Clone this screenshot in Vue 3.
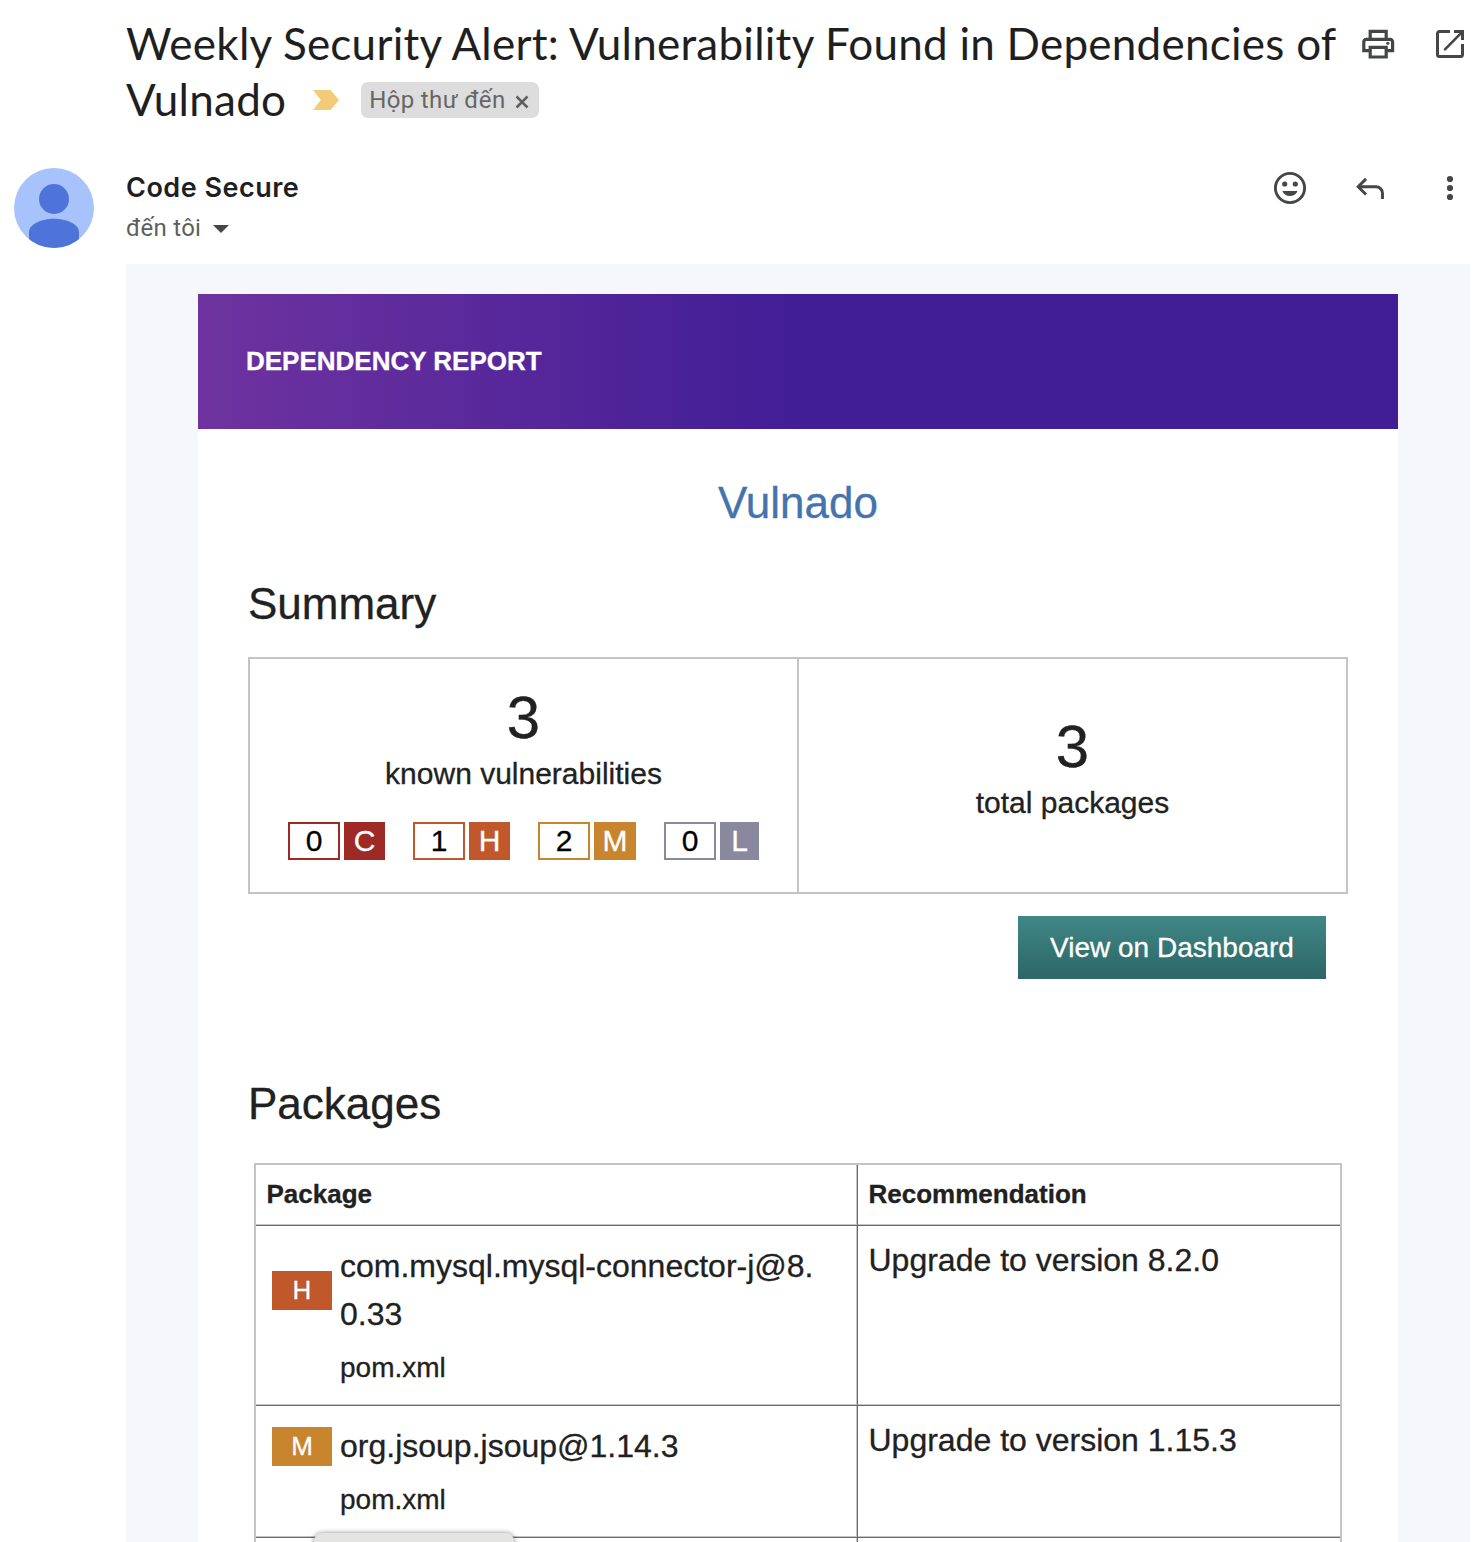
<script setup>
const severities = [
  { key: 'c', label: 'C', count: 0 },
  { key: 'h', label: 'H', count: 1 },
  { key: 'm', label: 'M', count: 2 },
  { key: 'l', label: 'L', count: 0 },
]

const packages = [
  { severity: 'h', label: 'H', lines: ['com.mysql.mysql-connector-j@8.', '0.33'], file: 'pom.xml', fix: 'Upgrade to version 8.2.0' },
  { severity: 'm', label: 'M', lines: ['org.jsoup.jsoup@1.14.3'], file: 'pom.xml', fix: 'Upgrade to version 1.15.3' },
]
</script>

<template>
  <div class="page">
    <header class="subject">
      <div class="subject-text">
        <h1 class="subject-line">Weekly Security Alert: Vulnerability Found in Dependencies of</h1>
        <div class="subject-row">
          <span class="subject-line">Vulnado</span>
          <svg class="marker" width="26" height="20" viewBox="0 0 26 20"><path d="M0 0h17.500L26 10l-8.500 10H0l7.800-10z" fill="#f1cb77" /></svg>
          <span class="chip">
            <span>Hộp thư đến</span>
            <svg width="14" height="14" viewBox="0 0 14 14"><path d="M1.500 1.500l11 11M12.500 1.500l-11 11" stroke="#5f5f5f" stroke-width="2.500" fill="none" /></svg>
          </span>
        </div>
      </div>
      <div class="actions subject-actions">
        <svg width="38.400" height="38.400" viewBox="0 0 24 24" fill="#444746">
          <path fill-rule="evenodd" d="M18 8V3H6v5H4.500C3.100 8 2 9.100 2 10.500V17h4v4h12v-4h4v-6.500C22 9.100 20.900 8 19.500 8zM8 5h8v3H8zM16 19H8v-4h8zM20 15h-2v-2H6v2H4v-4.300c0-.4.300-.7.700-.7h14.600c.4 0 .7.300.7.700z" />
          <circle cx="18" cy="11.400" r="1" />
        </svg>
        <svg width="32" height="32" viewBox="0 0 32 32" fill="none" stroke="#444746" stroke-width="3">
          <path d="M16 3.500H5.500a2 2 0 0 0-2 2v21a2 2 0 0 0 2 2h21a2 2 0 0 0 2-2V16" />
          <path d="M20 3.500h8.500V12" />
          <path d="M11 21.300L28 4.200" stroke-linecap="round" stroke-width="2.600" />
        </svg>
      </div>
    </header>

    <section class="sender">
      <svg class="avatar" width="80" height="80" viewBox="0 0 80 80">
        <defs><clipPath id="avatarClip"><circle cx="40" cy="40" r="40" /></clipPath></defs>
        <circle cx="40" cy="40" r="40" fill="#a8c2fb" />
        <g clip-path="url(#avatarClip)" fill="#4f74d9">
          <circle cx="40" cy="31" r="15" />
          <path d="M15 80V64C15 56 28 50.700 40 50.700S65 56 65 64v16z" />
        </g>
      </svg>
      <div class="sender-info">
        <div class="sender-name">Code Secure</div>
        <div class="sender-to">
          <span>đến tôi</span>
          <svg width="16" height="8" viewBox="0 0 16 8"><path d="M0 0h16L8 8z" fill="#444746" /></svg>
        </div>
      </div>
      <div class="actions">
        <svg width="40" height="40" viewBox="0 0 40 40" fill="#444746">
          <circle cx="20" cy="20" r="14.600" fill="none" stroke="#444746" stroke-width="2.900" />
          <circle cx="14.700" cy="16" r="2.600" />
          <circle cx="25.300" cy="16" r="2.600" />
          <path d="M12.300 23h15.200C26.200 26.300 23.300 28.100 19.900 28.100S13.600 26.300 12.300 23z" />
        </svg>
        <svg width="40" height="40" viewBox="0 0 40 40" fill="none" stroke="#444746" stroke-width="2.900">
          <path d="M16 10.900l-7.800 7.800 7.800 7.800M8.500 18.700H26a6.500 6.500 0 0 1 6.500 6.500V31" />
        </svg>
        <svg width="40" height="40" viewBox="0 0 40 40" fill="#444746">
          <circle cx="20" cy="11" r="3.100" /><circle cx="20" cy="20" r="3.100" /><circle cx="20" cy="29" r="3.100" />
        </svg>
      </div>
    </section>

    <main class="mail">
      <div class="report">
        <div class="banner">DEPENDENCY REPORT</div>
        <div class="content">
          <h2 class="project">Vulnado</h2>
          <h2 class="heading">Summary</h2>
          <div class="summary">
            <div class="cell">
              <div class="big">3</div>
              <div class="caption">known vulnerabilities</div>
              <div class="badges">
                <div v-for="s in severities" :key="s.key" class="badge" :class="s.key">
                  <span class="count">{{ s.count }}</span>
                  <span class="letter">{{ s.label }}</span>
                </div>
              </div>
            </div>
            <div class="cell total">
              <div class="big">3</div>
              <div class="caption">total packages</div>
            </div>
          </div>
          <div class="button-row"><a class="button">View on Dashboard</a></div>
          <h2 class="heading packages-heading">Packages</h2>
          <div class="packages">
            <div class="row head">
              <div class="col-package">Package</div>
              <div class="col-fix">Recommendation</div>
            </div>
            <div v-for="p in packages" :key="p.fix" class="row item">
              <div class="col-package">
                <div class="package">
                  <span class="tag" :class="p.severity">{{ p.label }}</span>
                  <div class="package-name"><div v-for="l in p.lines" :key="l">{{ l }}</div></div>
                </div>
                <div class="file">{{ p.file }}</div>
              </div>
              <div class="col-fix">{{ p.fix }}</div>
            </div>
            <div class="row tail">
              <div class="col-package"></div>
              <div class="col-fix"></div>
            </div>
          </div>
        </div>
      </div>
    </main>
    <div class="status-popup"></div>
  </div>
</template>

<style>
body { background: #fff; }
</style>

<style scoped>
* { box-sizing: border-box; }
svg { display: block; flex: none; }
.page {
  position: relative;
  width: 1474px;
  height: 1542px;
  overflow: hidden;
  background: #fff;
  color: #212121;
  font-family: "Liberation Sans", Arial, sans-serif;
}
h1, h2 { margin: 0; font-weight: 400; }

.subject { display: flex; height: 168px; padding: 15px 0 0 126px; }
.subject-text { width: 1232px; }
.subject-line {
  font: 400 44px/56px Lato, sans-serif;
  letter-spacing: 0.250px;
  color: #1f1f1f;
  white-space: nowrap;
}
.subject-row { display: flex; }
.marker { margin: 19px 22px 0 27px; }
.chip {
  display: flex;
  align-items: center;
  justify-content: space-between;
  width: 178px;
  height: 36px;
  margin-top: 11px;
  padding: 0 10px 0 8px;
  border-radius: 7px;
  background: #ddd;
  color: #666;
  font: 400 24px/36px Roboto, sans-serif;
  letter-spacing: 0.350px;
  white-space: nowrap;
}
.chip svg { margin-top: 3px; }
.actions { display: flex; }
.subject-actions { gap: 36.600px; align-items: center; height: 58px; padding-left: 0.800px; }

.sender { display: flex; height: 96px; padding-left: 14px; }
.sender-info { width: 1144px; margin-left: 32px; padding-top: 3px; }
.sender-name { font: 600 27px/34px Inter, sans-serif; letter-spacing: 0.500px; color: #1f1f1f; }
.sender-to {
  display: flex;
  align-items: center;
  gap: 12px;
  margin-top: 7px;
  font: 400 24px/32px Roboto, sans-serif;
  letter-spacing: 0.250px;
  color: #5e5e5e;
}
.sender-to svg { margin-top: 1px; }
.sender .actions { gap: 40px; }

.mail { width: 1344px; height: 1278px; margin-left: 126px; padding: 30px 72px 0; background: #f6f7fb; -webkit-text-stroke: 0.300px; }
.report { height: 1248px; background: #fff; }
.banner {
  height: 135px;
  padding-left: 48px;
  background: linear-gradient(90deg, #6e339f 0%, #411d96 50%, #411d96 100%);
  color: #fff;
  font-size: 26px;
  font-weight: 700;
  line-height: 134px;
}
.content { padding: 44px 50px 0; }
.project { font-size: 44px; line-height: 60px; text-align: center; color: #4573ad; }
.heading { margin: 41px 0 23px; font-size: 44px; line-height: 60px; }

.summary { display: flex; height: 237px; border: 2px solid #c4c4c4; text-align: center; }
.cell { width: 547px; padding-top: 25px; }
.total { width: 549px; padding-top: 54px; border-left: 2px solid #c4c4c4; }
.big { font-size: 60px; line-height: 68px; }
.caption { margin-top: 4px; font-size: 30px; line-height: 36px; }
.badges { display: flex; gap: 28px; margin: 30px 0 0 38px; }
.badge { display: flex; gap: 4px; height: 38px; font-size: 30px; }
.count { width: 52px; border: 2px solid; line-height: 33px; background: #fff; color: #000; }
.letter { width: 41px; color: #fff; line-height: 37px; }
.badge.m .letter { width: 42px; }
.badge.l .letter { width: 39px; }
.c .count { border-color: #9e2a26; }
.h .count { border-color: #c0582c; }
.m .count { border-color: #c9852d; }
.l .count { border-color: #8a889e; }
.c .letter { background: #9e2a26; }
.h .letter { background: #c0582c; }
.m .letter { background: #c9852d; }
.l .letter { background: #8a889e; }

.button-row { display: flex; justify-content: flex-end; padding: 22px 22px 0 0; }
.button {
  width: 308px;
  height: 63px;
  background: linear-gradient(#3f8785, #2d6667);
  color: #fff;
  font-size: 28px;
  line-height: 63px;
  text-align: center;
}
.packages-heading { margin: 95px 0 29px; }

.packages { width: 1088px; margin-left: 6px; border: 2px solid #c4c4c4; border-bottom: 0; }
.row { display: flex; border-bottom: 1px solid #6b6b6b; box-shadow: inset 0 -1px #c4c4c4; }
.col-package { width: 602px; border-right: 1px solid #6b6b6b; box-shadow: inset -1px 0 #c4c4c4; }
.col-fix { padding-left: 10.500px; }
.head { height: 61px; font-size: 26px; font-weight: 700; line-height: 40px; }
.head > div { padding-top: 9px; }
.head .col-package { padding-left: 10.500px; }
.item .col-package { padding: 16px 0 17px 16px; }
.item .col-fix { padding-top: 10px; font-size: 32px; line-height: 48px; }
.package { display: flex; align-items: center; }
.tag { width: 60px; height: 39px; color: #fff; font-size: 26px; line-height: 38px; text-align: center; }
.tag.h { background: #c0582c; }
.tag.m { background: #c9852d; }
.package-name { margin-left: 8px; font-size: 32px; line-height: 48px; }
.file { margin: 9px 0 0 68px; font-size: 28px; line-height: 42px; }
.item { height: 180px; }
.item:nth-child(3) { height: 132px; }
.tail { height: 20px; }

.status-popup {
  position: absolute;
  left: 314px;
  top: 1533px;
  width: 200px;
  height: 20px;
  border-radius: 8px;
  background: #e4e4e2;
  box-shadow: 0 0 5px rgba(0, 0, 0, 0.45);
}
</style>
